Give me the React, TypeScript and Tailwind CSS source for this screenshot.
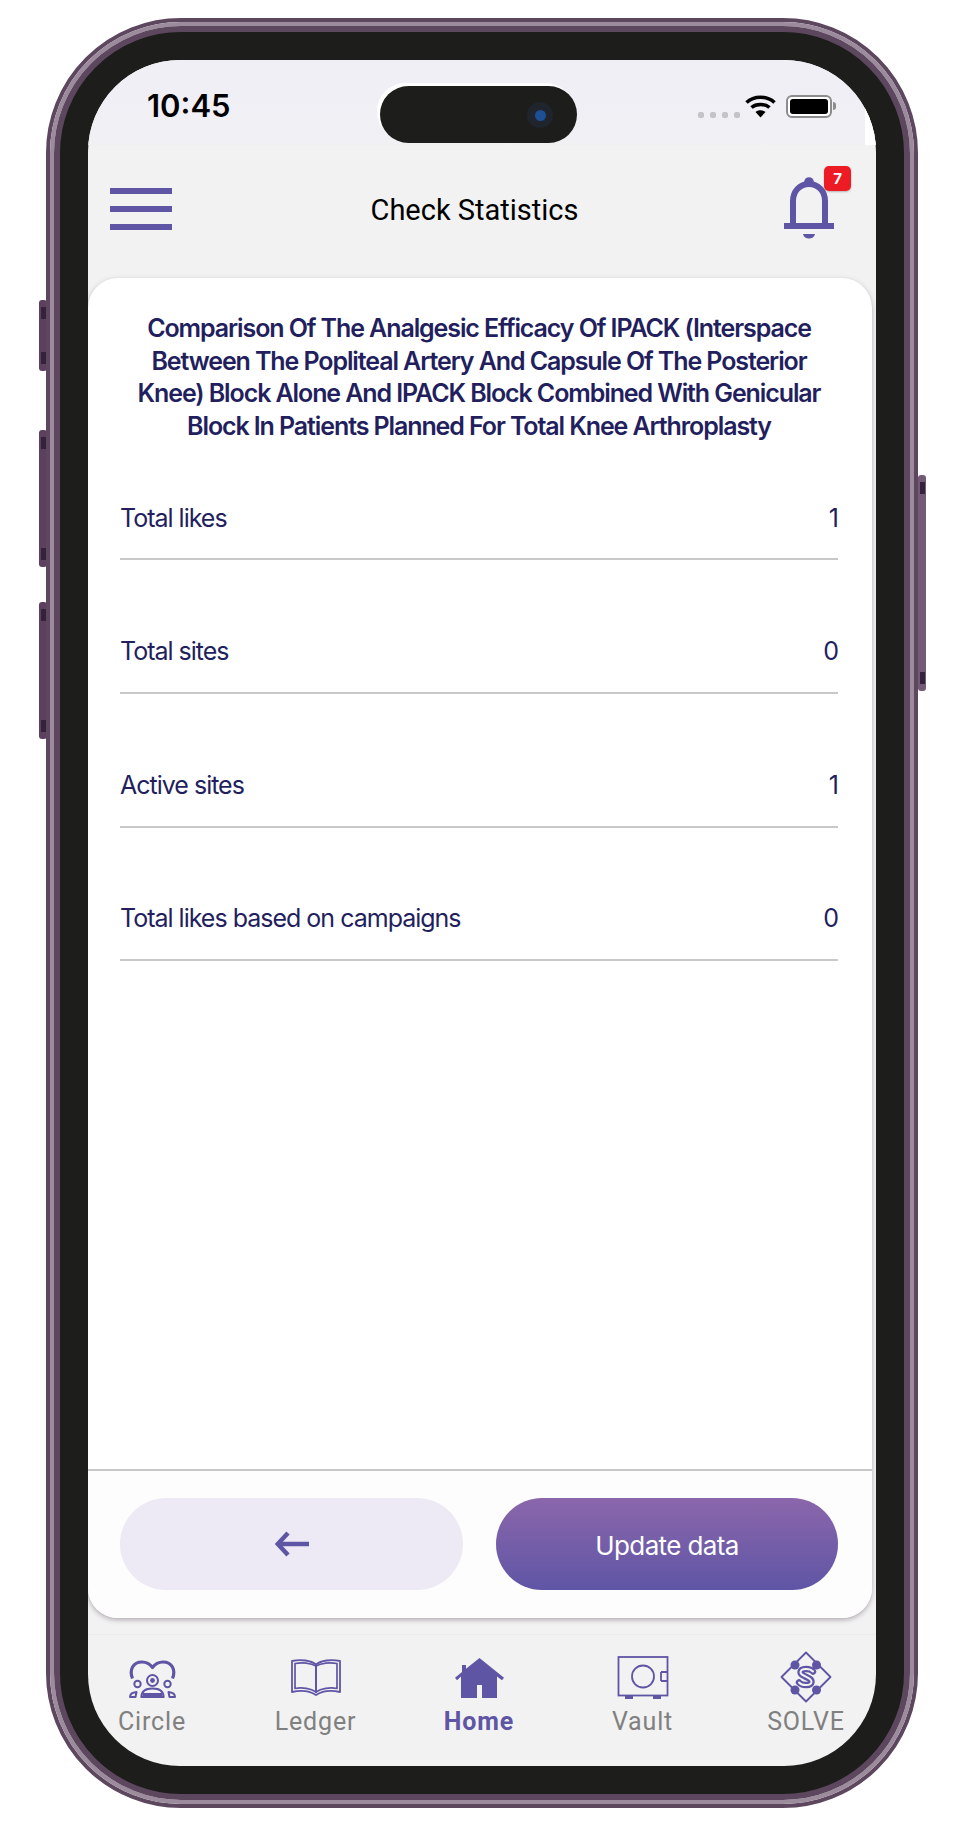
const P = "#5f55a5";

function SideKey({ className, light }: { className: string; light?: boolean }) {
  return (
    <div className={`absolute w-[8px] rounded-[3px] flex flex-col justify-between py-[7px] ${light ? "bg-[#735a75]" : "bg-[#5d3f60]"} ${className}`}>
      <div className="h-[12px] w-[5px] mx-auto bg-[#33223a]" />
      <div className="h-[12px] w-[5px] mx-auto bg-[#33223a]" />
    </div>
  );
}

function CircleIcon() {
  return (
    <svg width="47" height="38" viewBox="0 0 47 38" fill="none">
      <g stroke={P} strokeLinejoin="round">
        <path d="M3.500 18.500C0 10 4 2 13 2C18 2 21 4 23.500 7.500C26 4 29 2 34 2C43 2 47 10 43.500 18.500" strokeWidth="3.200" />
        <circle cx="23.500" cy="20.500" r="5.500" strokeWidth="2" />
        <circle cx="8.500" cy="24" r="3.200" strokeWidth="2" />
        <circle cx="38.500" cy="24" r="3.200" strokeWidth="2" />
        <path d="M12.500 37c0-5.500 4-8.500 11-8.500s11 3 11 8.500Z" strokeWidth="2.200" />
        <path d="M1 37c0-2.500 1.500-4.500 6.500-5l-1 5Z" strokeWidth="2" />
        <path d="M46 37c0-2.500-1.500-4.500-6.500-5l1 5Z" strokeWidth="2" />
      </g>
      <circle cx="23.500" cy="20.500" r="2.400" fill={P} />
      <path d="M14 33h19v4H14Z" fill={P} />
    </svg>
  );
}

function LedgerIcon() {
  return (
    <svg className="mb-[2px]" width="50" height="37" viewBox="0 0 50 37" fill="none">
      <g stroke={P} strokeLinejoin="round">
        <path d="M25 5.500C20 1.500 10 0 1 2V33C10 31 19 32 25 36C31 32 40 31 49 33V2C40 0 30 1.500 25 5.500Z" strokeWidth="1.800" />
        <path d="M25 7C20 4 11 3 4 4.500V29.500C11 28 20 29.500 25 33C30 29.500 39 28 46 29.500V4.500C39 3 30 4 25 7Z" strokeWidth="1.700" />
        <path d="M25 6V34" strokeWidth="2" />
      </g>
    </svg>
  );
}

function HomeIcon() {
  return (
    <svg width="49" height="40" viewBox="0 0 49 40">
      <path fill={P} d="M24.500 0 49 19.800 47 22.300 42 18.500V40H27V27H22V40H6V18.500L2 22.300 0 19.800 7 14V7H11V10.800Z" />
    </svg>
  );
}

function VaultIcon() {
  return (
    <svg className="mb-[-1px]" width="52" height="43" viewBox="0 0 52 43" fill="none" stroke={P} strokeWidth="1.800">
      <rect x="1.500" y="1" width="49" height="38.500" />
      <circle cx="26" cy="20.500" r="11" />
      <path d="M44 16H50M44 25H50M44 16V25" />
      <rect x="8" y="39.500" width="8" height="3.500" fill={P} stroke="none" />
      <rect x="36" y="39.500" width="8" height="3.500" fill={P} stroke="none" />
    </svg>
  );
}

function SolveIcon() {
  const s = "M33 20.500C30 17 21 17 20.500 21C20 25.500 32 26 31.500 31C31 35 22 35 19 31.500";
  return (
    <svg className="mb-[-5px]" width="52" height="52" viewBox="0 0 52 52" fill="none">
      <path d="M26 1.500 50.500 26 26 50.500 1.500 26Z" stroke={P} strokeWidth="1.800" strokeLinejoin="round" />
      <circle cx="15" cy="14" r="4.500" fill={P} />
      <circle cx="36.500" cy="14" r="4.500" fill={P} />
      <circle cx="15" cy="39" r="4.500" fill={P} />
      <circle cx="36.500" cy="39" r="4.500" fill={P} />
      <path d={s} stroke={P} strokeWidth="6.400" strokeLinecap="round" />
      <path d={s} stroke="#f2f2f2" strokeWidth="2" strokeLinecap="round" />
    </svg>
  );
}

function Tab({ label, active, children }: { label: string; active?: boolean; children: React.ReactNode }) {
  return (
    <div className="w-[100px] flex flex-col items-center">
      <div className="h-[54px] flex items-end justify-center">{children}</div>
      <div className={`mt-[8px] text-[25px] leading-[32px] tracking-[0.85px] font-['Roboto',sans-serif] ${active ? "font-bold text-[#5f55a5]" : "text-[#808080]"}`}>
        {label}
      </div>
    </div>
  );
}

function Row({ label, value }: { label: string; value: string }) {
  return (
    <div className="h-[82px] mb-[51.600px] border-b-2 border-[#c8c8c8] flex items-center justify-between text-[25px] tracking-[-1px] text-[#231f5e]">
      <span>{label}</span>
      <span>{value}</span>
    </div>
  );
}

export default function App() {
  return (
    <div className="relative w-[957px] h-[1825px] bg-white pt-[18px] pl-[46px] overflow-hidden font-['Inter',sans-serif]">
      <div className="relative w-[872px] h-[1790px]">
        <SideKey className="left-[-7px] top-[282px] h-[71px]" />
        <SideKey className="left-[-7px] top-[412px] h-[137px]" />
        <SideKey className="left-[-7px] top-[584px] h-[137px]" />
        <SideKey light className="right-[-8px] top-[457px] h-[216px]" />

        <div className="relative w-full h-full rounded-[135px] border-[4px] border-[#5d475e]">
          <div className="w-full h-full rounded-[131px] border-[4px] border-[#9c8b9d]">
            <div className="w-full h-full rounded-[127px] border-[6px] border-[#5d475e] bg-[#1d1d1b] p-[28px]">
              <div className="relative w-full h-full rounded-[92px] overflow-hidden bg-[#f2f2f2] flex flex-col">
                {/* status bar */}
                <div className="relative h-[85px] shrink-0 bg-gradient-to-b from-[#f0eff5] via-[#f0eff5] to-[#f1f1f4]">
                  <span className="absolute left-[59px] top-[26px] text-[31px] leading-[40px] font-semibold text-black">10:45</span>
                  <div className="absolute left-[610px] top-[52px] flex gap-[6px]">
                    <i className="block w-[6px] h-[6px] rounded-[2px] bg-[#c4c4c8]" />
                    <i className="block w-[6px] h-[6px] rounded-[2px] bg-[#c4c4c8]" />
                    <i className="block w-[6px] h-[6px] rounded-[2px] bg-[#c4c4c8]" />
                    <i className="block w-[6px] h-[6px] rounded-[2px] bg-[#c4c4c8]" />
                  </div>
                  <svg className="absolute left-[657px] top-[34px]" width="31" height="24" viewBox="0 0 31 24" fill="none" stroke="#000" strokeWidth="3.600">
                    <path d="M1.500 8.500C9 1.500 22 1.500 29.500 8.500" />
                    <path d="M6.500 13.500C11 9.500 20 9.500 24.500 13.500" />
                    <path d="M15.500 23.500 10.500 18C13 15.800 18 15.800 20.500 18Z" fill="#000" stroke="none" />
                  </svg>
                  <div className="absolute left-[698px] top-[35px] w-[46px] h-[23px] rounded-[6px] border-2 border-[#8c8c8c] p-[2px] bg-white">
                    <div className="w-full h-full rounded-[3px] bg-black" />
                  </div>
                  <div className="absolute left-[745px] top-[42px] w-[3px] h-[8px] rounded-r-[3px] bg-[#8c8c8c]" />
                  <div className="absolute right-0 top-[40px] w-[11px] h-[45px] bg-white" />
                </div>

                {/* header */}
                <div className="relative h-[133px] shrink-0 flex items-center justify-center">
                  <div className="absolute left-[22px] top-[43px] w-[62px] flex flex-col gap-[12px]">
                    <div className="h-[6px] bg-[#5f55a5]" />
                    <div className="h-[6px] bg-[#5f55a5]" />
                    <div className="h-[6px] bg-[#5f55a5]" />
                  </div>
                  <h1 className="mt-[-4px] mr-[15px] text-[29px] leading-[36px] font-normal text-black font-['Roboto',sans-serif]">Check Statistics</h1>
                  <svg className="absolute left-[696px] top-[32px]" width="50" height="63" viewBox="0 0 50 63" fill="none">
                    <circle cx="25" cy="5" r="4.800" fill={P} />
                    <path d="M9 49V24C9 14 16 7 25 7s16 7 16 17V49" stroke={P} strokeWidth="6" />
                    <rect x="0" y="46" width="50" height="6" fill={P} />
                    <path d="M19 57H31C30 63 20 63 19 57Z" fill={P} />
                  </svg>
                  <div className="absolute left-[736px] top-[21px] w-[27px] h-[25px] rounded-[5px] bg-[#ed1c24] shadow-[0_1px_2px_rgba(0,0,0,0.25)] flex items-center justify-center text-[15px] leading-none font-bold text-white">7</div>
                </div>

                {/* card */}
                <div className="h-[1340px] w-[784px] shrink-0 rounded-[30px] bg-white shadow-[0_2px_5px_rgba(60,40,60,0.35)] flex flex-col overflow-hidden">
                  <div className="flex-1 pt-[34px] pl-[32px] pr-[34px]">
                    <h2 className="text-center text-[25px] leading-[32.600px] font-semibold tracking-[-1.1px] text-[#231f5e] mb-[36px]">
                      Comparison Of The Analgesic Efficacy Of IPACK (Interspace<br />
                      Between The Popliteal Artery And Capsule Of The Posterior<br />
                      Knee) Block Alone And IPACK Block Combined With Genicular<br />
                      Block In Patients Planned For Total Knee Arthroplasty
                    </h2>
                    <Row label="Total likes" value="1" />
                    <Row label="Total sites" value="0" />
                    <Row label="Active sites" value="1" />
                    <Row label="Total likes based on campaigns" value="0" />
                  </div>
                  <div className="h-[149px] shrink-0 border-t-2 border-[#c8c8c8] bg-[#fdfdfe] px-[32px] pt-[27px] flex gap-[33px]">
                    <button className="w-[343px] h-[92px] rounded-[46px] bg-[#eeeaf5] flex items-center justify-center">
                      <svg width="34" height="26" viewBox="0 0 34 26" fill="none" stroke={P} strokeWidth="4.500">
                        <path d="M13 2 2.800 13 13 24" />
                        <path d="M3 13H34" />
                      </svg>
                    </button>
                    <button className="w-[342px] h-[92px] pt-[3px] rounded-[46px] bg-gradient-to-b from-[#8b66ab] to-[#5f55a5] text-white text-[26px] tracking-[-0.63px] flex items-center justify-center">
                      Update data
                    </button>
                  </div>
                </div>

                {/* tabs */}
                <div className="mt-[16px] flex-1 border-t border-[#ececec] pl-[14px] pr-[20px] pt-[9px] flex justify-between">
                  <Tab label="Circle"><CircleIcon /></Tab>
                  <Tab label="Ledger"><LedgerIcon /></Tab>
                  <Tab label="Home" active><HomeIcon /></Tab>
                  <Tab label="Vault"><VaultIcon /></Tab>
                  <Tab label="SOLVE"><SolveIcon /></Tab>
                </div>

                {/* dynamic island */}
                <div className="absolute left-[292px] top-[26px] w-[197px] h-[57px] rounded-[29px] bg-[#1d1d1b] shadow-[-3px_-3px_0_#ffffff]">
                  <div className="absolute right-[24px] top-[16px] w-[26px] h-[26px] rounded-full bg-[#20242c] flex items-center justify-center">
                    <div className="w-[11px] h-[11px] rounded-full bg-[#1d4f94]" />
                  </div>
                </div>
              </div>
            </div>
          </div>
        </div>
      </div>
    </div>
  );
}
